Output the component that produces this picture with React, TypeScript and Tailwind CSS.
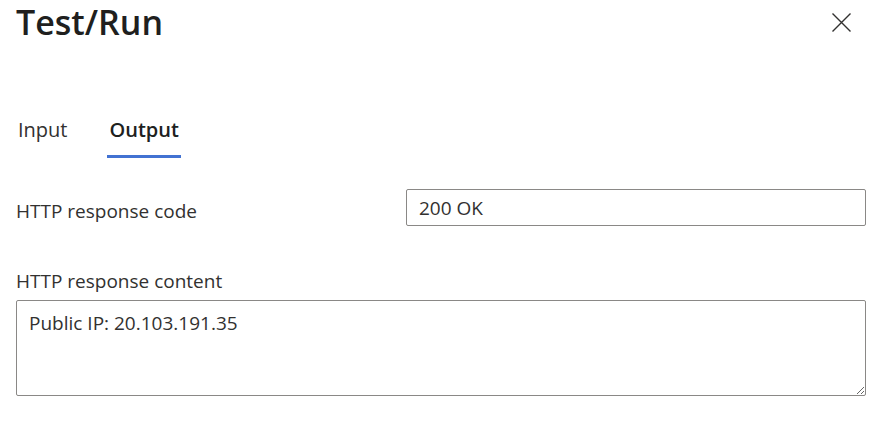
import React from "react";

export default function App() {
  return (
    <div className="w-[884px] h-[423px] bg-white font-['Open_Sans',sans-serif] text-[#323130] overflow-hidden">
      <div className="flex justify-between pl-4 pr-[33px]">
        <h1 className="text-[34px] leading-[44px] font-semibold text-[#201f1e]">Test/Run</h1>
        <svg className="mt-[13px]" width="19" height="19" viewBox="0 0 19 19" fill="none">
          <path d="M0.5 0.5 L18.5 18.5 M18.5 0.5 L0.5 18.5" stroke="#323130" strokeWidth="1.4" />
        </svg>
      </div>

      <div className="flex items-start pl-4 mt-[72px] gap-[38px] text-[20px] leading-[28px]">
        <div className="px-[2px] pb-[14px]">Input</div>
        <div className="px-[2px] pb-[11px] border-b-[3px] border-[#4272d2] font-semibold text-[#201f1e]">Output</div>
      </div>

      <div className="flex items-start pl-4 pr-[18px] mt-[31px]">
        <div className="w-[390px] mt-[8px] text-[19px] leading-[28px]">HTTP response code</div>
        <input
          readOnly
          value="200 OK"
          className="flex-1 h-[37px] border border-[#8a8886] rounded-xs pl-[12px] text-[19px] leading-[28px] text-[#323130] outline-none font-['Open_Sans',sans-serif]"
        />
      </div>

      <div className="px-4 mt-[41px] text-[19px] leading-[28px]">HTTP response content</div>
      <div className="pl-4 pr-[18px] mt-[5px]">
        <textarea
          readOnly
          value="Public IP: 20.103.191.35"
          className="block w-full h-[96px] border border-[#8a8886] rounded-xs pl-[12px] pt-[8px] text-[19px] leading-[28px] text-[#323130] outline-none font-['Open_Sans',sans-serif]"
        />
      </div>
    </div>
  );
}
